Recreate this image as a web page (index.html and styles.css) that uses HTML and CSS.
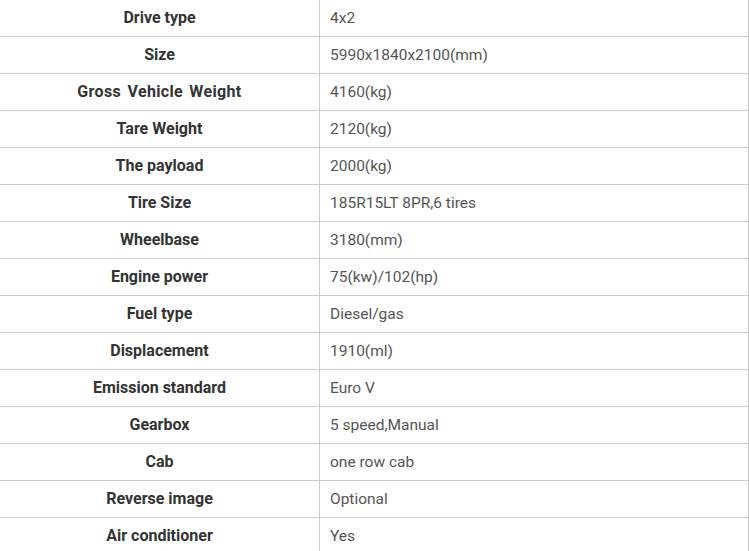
FILE: index.html
```html
<!DOCTYPE html>
<html>
<head>
<meta charset="utf-8">
<link rel="stylesheet" href="styles.css">
</head>
<body>
<table class="spec">
<tbody>
<tr><th>Drive type</th><td>4x2</td></tr>
<tr><th>Size</th><td>5990x1840x2100(mm)</td></tr>
<tr><th class="wide">Gross Vehicle Weight</th><td>4160(kg)</td></tr>
<tr><th>Tare Weight</th><td>2120(kg)</td></tr>
<tr><th>The payload</th><td>2000(kg)</td></tr>
<tr><th>Tire Size</th><td>185R15LT 8PR,6 tires</td></tr>
<tr><th>Wheelbase</th><td>3180(mm)</td></tr>
<tr><th>Engine power</th><td>75(kw)/102(hp)</td></tr>
<tr><th>Fuel type</th><td>Diesel/gas</td></tr>
<tr><th>Displacement</th><td>1910(ml)</td></tr>
<tr><th>Emission standard</th><td>Euro V</td></tr>
<tr><th>Gearbox</th><td>5 speed,Manual</td></tr>
<tr><th>Cab</th><td>one row cab</td></tr>
<tr><th>Reverse image</th><td>Optional</td></tr>
<tr><th>Air conditioner</th><td>Yes</td></tr>
</tbody>
</table>
</body>
</html>
```
FILE: styles.css
```css
html, body {
  margin: 0;
  padding: 0;
  background: #fff;
}
body {
  font-family: Roboto, "Liberation Sans", sans-serif;
  overflow: hidden;
}
.spec {
  border-collapse: collapse;
  margin: -1px 0 0 -1px;
  width: 750px;
  table-layout: fixed;
}
.spec th, .spec td {
  border: 1px solid #ccc;
  height: 37px;
  padding: 0 10px;
  box-sizing: border-box;
  vertical-align: middle;
  line-height: 20px;
}
.spec th {
  width: 320px;
  font-size: 16px;
  font-weight: 700;
  color: #333;
  text-align: center;
}
.spec th.wide {
  word-spacing: 2px;
  letter-spacing: 0.35px;
}
.spec td {
  font-size: 15.5px;
  color: #555;
  text-align: left;
}
```
